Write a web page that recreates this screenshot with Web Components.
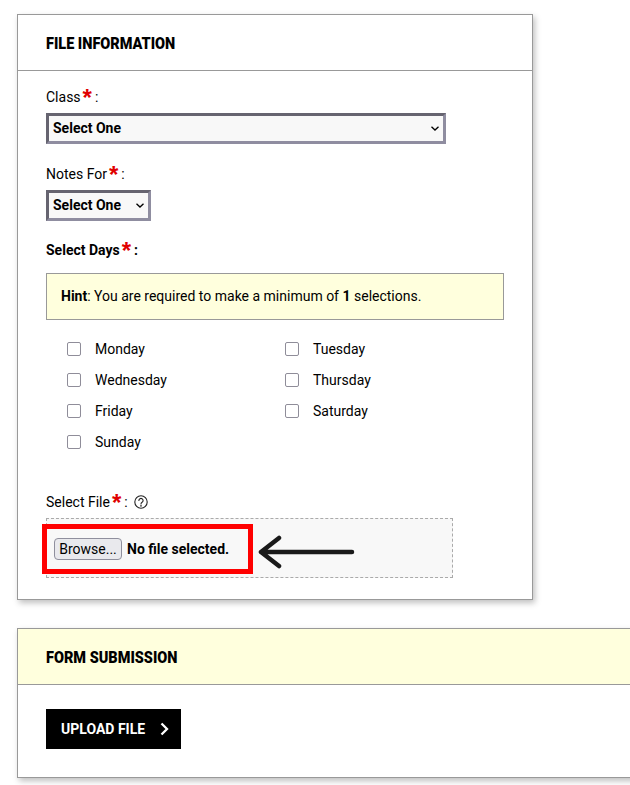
<!DOCTYPE html>
<html lang="en">
<head>
<meta charset="utf-8">
<title>File upload</title>
<style>
  html, body { margin: 0; padding: 0; background: #fff; overflow: hidden; height: 785px; }
  body { font: 14px/20px Roboto, sans-serif; color: #000; }
  main { display: flex; flex-direction: column; gap: 28px; padding: 14px 0 0 17px; width: 700px; }
</style>
</head>
<body>
<main>
  <file-card heading="FILE INFORMATION" style="width:516px">
    <form-field label="Class" gap="8">
      <native-select style="width:400px"></native-select>
    </form-field>
    <form-field label="Notes For" gap="8" style="margin-top:20px">
      <native-select style="width:105px"></native-select>
    </form-field>
    <form-field label="Select Days" strong gap="15" style="margin-top:19px">
      <hint-box>
        <b>Hint</b>: You are required to make a minimum of <b>1</b> selections.
      </hint-box>
    </form-field>
    <day-grid>
      <day-check>Monday</day-check>
      <day-check>Tuesday</day-check>
      <day-check>Wednesday</day-check>
      <day-check>Thursday</day-check>
      <day-check>Friday</day-check>
      <day-check>Saturday</day-check>
      <day-check>Sunday</day-check>
    </day-grid>
    <form-field label="Select File" help gap="8" style="margin-top:35px">
      <file-picker></file-picker>
    </form-field>
  </file-card>

  <file-card heading="FORM SUBMISSION" tint style="width:700px">
    <submit-button>UPLOAD FILE</submit-button>
  </file-card>
</main>

<script>
// Bordered card with a heading bar
class FileCard extends HTMLElement {
  constructor() {
    super();
    const root = this.attachShadow({ mode: 'open' });
    root.innerHTML = `
      <style>
        :host {
          display:block; box-sizing:border-box; background:#fff;
          border:1px solid #999; box-shadow:2px 3px 6px rgba(0,0,0,.25);
        }
        header {
          box-sizing:border-box; height:56px; padding:2px 28px 0;
          display:flex; align-items:center;
          border-bottom:1px solid #999;
          font-weight:900; font-size:16px;
        }
        /* the heading face is narrower than plain Roboto black */
        header span { transform:scaleX(.905); transform-origin:left center; white-space:nowrap; }
        :host([tint]) header { background:#ffffdd; }
        .body { padding:16px 28px 21px; }
        :host([tint]) .body { padding:24px 28px 28px; }
      </style>
      <header><span></span></header>
      <div class="body"><slot></slot></div>
    `;
    root.querySelector('header span').textContent = this.getAttribute('heading');
  }
}
customElements.define('file-card', FileCard);

// Label with the red required star, then the control
class FormField extends HTMLElement {
  constructor() {
    super();
    const root = this.attachShadow({ mode: 'open' });
    root.innerHTML = `
      <style>
        :host { display:block; }
        .lbl { display:flex; align-items:center; height:20px; }
        :host([strong]) .lbl { font-weight:700; }
        .star { color:#e00000; font:700 24px/20px "Liberation Sans", sans-serif; margin:0 3px 0 2px; position:relative; top:1px; }
        svg { margin-left:6px; }
      </style>
      <div class="lbl"><span class="t"></span><span class="star">*</span><span>:</span></div>
      <div class="ctl"><slot></slot></div>
    `;
    root.querySelector('.t').textContent = this.getAttribute('label');
    root.querySelector('.ctl').style.marginTop = (this.getAttribute('gap') - 2) + 'px';
    if (this.hasAttribute('help')) {
      root.querySelector('.lbl').insertAdjacentHTML('beforeend', `
        <svg width="14" height="14" viewBox="0 0 14 14" fill="none" stroke="#222" stroke-width="1.1">
          <circle cx="7" cy="7" r="6.2"/>
          <path d="M4.9 5.5a2.1 2.1 0 1 1 3.200 1.800c-.8.500-1.100.9-1.100 1.700" stroke-linecap="round"/>
          <circle cx="7" cy="10.800" r=".3" fill="#222"/>
        </svg>`);
    }
  }
}
customElements.define('form-field', FormField);

// Plain select with the "Select One" prompt
class NativeSelect extends HTMLElement {
  constructor() {
    super();
    const root = this.attachShadow({ mode: 'open' });
    root.innerHTML = `
      <style>
        :host { display:block; }
        select {
          appearance:none; display:block; box-sizing:border-box; width:100%; height:31px; margin:0;
          padding:0 0 2px 4px; border:3px solid; border-color:#666470 #8f8da0 #8f8da0 #666470;
          border-radius:0; color:#000;
          background:#f8f8f8 url('data:image/svg+xml;utf8,<svg xmlns="http://www.w3.org/2000/svg" width="8" height="5" fill="none" stroke="black" stroke-width="1.300"><path d="M.5.7 4 4 7.500.7"/></svg>') right 4px center no-repeat;
          font:700 14px Roboto, sans-serif;
        }
      </style>
      <select aria-label="Select One"><option>Select One</option></select>
    `;
  }
}
customElements.define('native-select', NativeSelect);

// Pale yellow note
class HintBox extends HTMLElement {
  constructor() {
    super();
    this.attachShadow({ mode: 'open' }).innerHTML = `
      <style>
        :host {
          display:block; box-sizing:border-box; width:458px; height:47px;
          padding:0 14px; line-height:45px;
          background:#ffffdd; border:1px solid #999;
        }
      </style>
      <slot></slot>
    `;
  }
}
customElements.define('hint-box', HintBox);

// Two column list of day checkboxes
class DayGrid extends HTMLElement {
  constructor() {
    super();
    this.attachShadow({ mode: 'open' }).innerHTML = `
      <style>
        :host {
          display:grid; grid-template-columns:218px 218px; grid-auto-rows:31px;
          padding:13px 0 0 21px;
        }
      </style>
      <slot></slot>
    `;
  }
}
customElements.define('day-grid', DayGrid);

class DayCheck extends HTMLElement {
  constructor() {
    super();
    this.attachShadow({ mode: 'open' }).innerHTML = `
      <style>
        :host { display:block; }
        label { display:flex; align-items:center; gap:14px; height:31px; }
        input {
          appearance:none; box-sizing:border-box; width:14px; height:14px; margin:0;
          background:#fff; border:1px solid #8f8d99; border-radius:2px;
        }
      </style>
      <label><input type="checkbox"><span><slot></slot></span></label>
    `;
  }
}
customElements.define('day-check', DayCheck);

// Dashed drop area, with the red mark and the arrow lying over it
class FilePicker extends HTMLElement {
  constructor() {
    super();
    this.attachShadow({ mode: 'open' }).innerHTML = `
      <style>
        :host {
          display:flex; align-items:center; box-sizing:border-box; position:relative;
          width:407px; height:60px; padding:2px 7px 0;
          background:#f8f8f8; border:1px dashed #aaa;
        }
        button {
          box-sizing:border-box; width:68px; height:22px; padding:0; margin:0;
          background:#e9e9ed; color:#000; border:1px solid #8f8f9d; border-radius:4px;
          font:14px Roboto, sans-serif;
        }
        span { margin-left:5px; font-weight:700; }
        .mark {
          position:absolute; left:-5px; top:5px; box-sizing:border-box;
          width:211px; height:50px; border:5px solid #f00;
        }
        svg { position:absolute; left:210px; top:16px; }
      </style>
      <button type="button">Browse...</button><span>No file selected.</span>
      <div class="mark"></div>
      <svg width="100" height="34" viewBox="0 0 100 34" fill="none" stroke="#1a1a1a" stroke-width="4.500" stroke-linecap="round" stroke-linejoin="round">
        <path d="M95 17H4M22 3 4 17l18 14"/>
      </svg>
    `;
  }
}
customElements.define('file-picker', FilePicker);

// Black call to action
class SubmitButton extends HTMLElement {
  constructor() {
    super();
    this.attachShadow({ mode: 'open' }).innerHTML = `
      <style>
        :host {
          display:inline-flex; align-items:center; box-sizing:border-box;
          width:135px; height:40px; padding:0 11px 0 15px; gap:15px;
          background:#000; color:#fff; font-weight:700; font-size:14px;
        }
      </style>
      <slot></slot>
      <svg width="9" height="14" viewBox="0 0 9 14" fill="none" stroke="#fff" stroke-width="2.300">
        <path d="M1.500 1.500 7 7l-5.500 5.500"/>
      </svg>
    `;
  }
}
customElements.define('submit-button', SubmitButton);
</script>
</body>
</html>
